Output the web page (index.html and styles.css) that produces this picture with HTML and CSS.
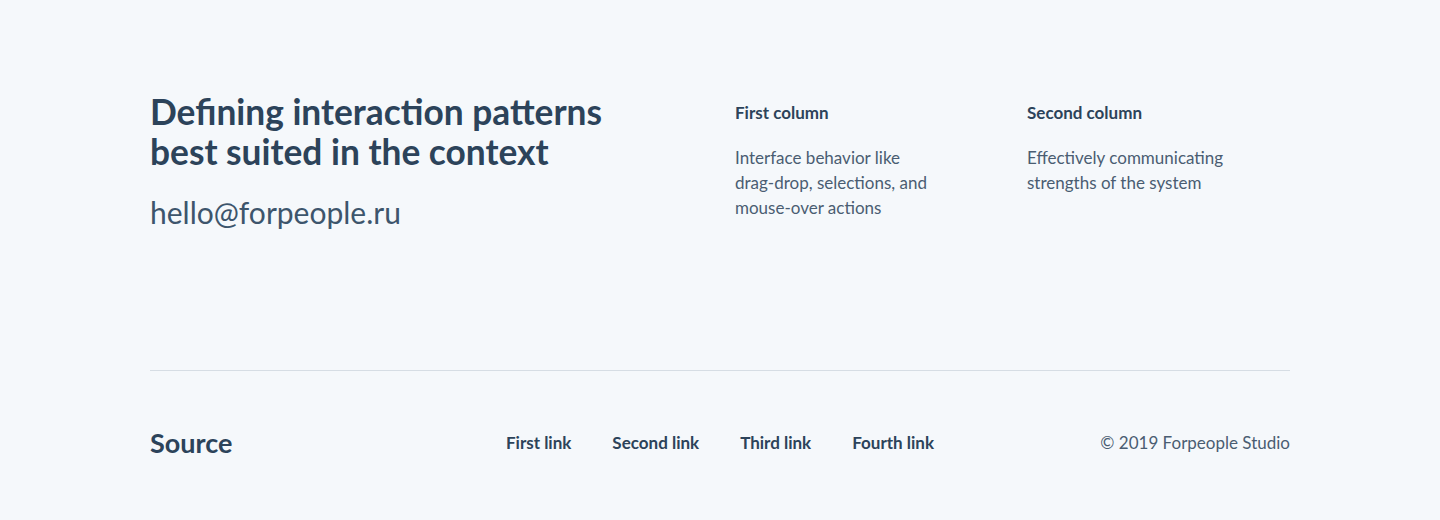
FILE: index.html
```html
<!DOCTYPE html>
<html lang="en">
<head>
<meta charset="utf-8">
<title>Footer</title>
<link rel="stylesheet" href="styles.css">
</head>
<body>
<div class="page">
  <section class="top">
    <div class="intro">
      <h2 class="title">Defining interaction patterns<br>best suited in the context</h2>
      <a class="email" href="#">hello@forpeople.ru</a>
    </div>
    <div class="col">
      <h3 class="col-title">First column</h3>
      <p class="col-text">Interface behavior like<br>drag-drop, selections, and<br>mouse-over actions</p>
    </div>
    <div class="col">
      <h3 class="col-title">Second column</h3>
      <p class="col-text">Effectively communicating<br>strengths of the system</p>
    </div>
  </section>
  <footer class="bottom">
    <div class="brand">Source</div>
    <nav class="links">
      <a href="#">First link</a>
      <a href="#">Second link</a>
      <a href="#">Third link</a>
      <a href="#">Fourth link</a>
    </nav>
    <div class="copy">© 2019 Forpeople Studio</div>
  </footer>
</div>
</body>
</html>
```
FILE: styles.css
```css
* { box-sizing: border-box; }
html, body { margin: 0; padding: 0; }
body {
  background: #f5f8fb;
  font-family: Lato, "Liberation Sans", sans-serif;
  color: #2c435a;
}
.page {
  width: 1140px;
  margin: 0 auto;
  padding-top: 92px;
}
.top {
  display: grid;
  grid-template-columns: 585px 292px 1fr;
  height: 279px;
  border-bottom: 1px solid #d6dde4;
}
.title {
  margin: 0;
  font-size: 35.3px;
  line-height: 40px;
  font-weight: 700;
  color: #2c435a;
}
.email {
  display: block;
  margin-top: 22px;
  font-size: 30px;
  line-height: 36px;
  color: #3d556c;
  text-decoration: none;
}
.col { padding-top: 9px; }
.col-title {
  margin: 0;
  font-size: 17px;
  line-height: 24px;
  font-weight: 700;
  color: #2c435a;
}
.col-text {
  margin: 20px 0 0;
  font-size: 17px;
  line-height: 25px;
  color: #4a5d72;
}
.bottom {
  display: grid;
  grid-template-columns: 1fr auto 1fr;
  align-items: center;
  padding-top: 56px;
}
.brand {
  font-size: 27px;
  line-height: 32px;
  font-weight: 700;
  color: #2c435a;
}
.links {
  display: flex;
  gap: 41px;
}
.links a {
  font-size: 17px;
  line-height: 24px;
  font-weight: 700;
  color: #2c435a;
  text-decoration: none;
}
.copy {
  justify-self: end;
  font-size: 17px;
  line-height: 24px;
  color: #4a5d72;
}
```
